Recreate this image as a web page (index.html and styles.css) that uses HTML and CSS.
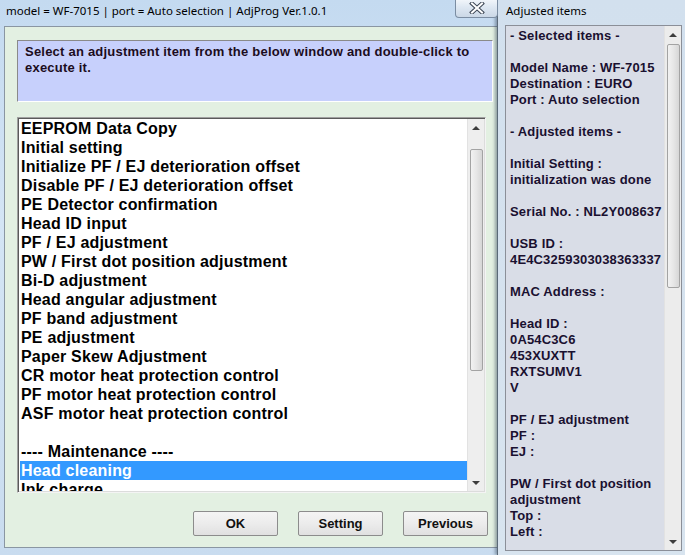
FILE: index.html
```html
<!DOCTYPE html>
<html lang="en">
<head>
<meta charset="UTF-8">
<title>AdjProg</title>
<link rel="stylesheet" href="styles.css">
</head>
<body>

<div class="desk">
  <div class="win main">
    <div class="titlebar">
      <span class="title">model = WF-7015 | port = Auto selection | AdjProg Ver.1.0.1</span>
      <button class="close" title="Close">
        <svg width="16" height="12" viewBox="0 0 16 12">
          <path d="M3 1.5 L13 10.5 M13 1.5 L3 10.5" stroke="#3c4654" stroke-width="4" stroke-linecap="square"/>
          <path d="M3 1.5 L13 10.5 M13 1.5 L3 10.5" stroke="#ffffff" stroke-width="2" stroke-linecap="square"/>
        </svg>
      </button>
    </div>
    <div class="client">
      <div class="hint">Select an adjustment item from the below window and double-click to execute it.</div>
      <div class="listbox">
        <ul class="items">
          <li>EEPROM Data Copy</li>
          <li>Initial setting</li>
          <li>Initialize PF / EJ deterioration offset</li>
          <li>Disable PF / EJ deterioration offset</li>
          <li>PE Detector confirmation</li>
          <li>Head ID input</li>
          <li>PF / EJ adjustment</li>
          <li>PW / First dot position adjustment</li>
          <li>Bi-D adjustment</li>
          <li>Head angular adjustment</li>
          <li>PF band adjustment</li>
          <li>PE adjustment</li>
          <li>Paper Skew Adjustment</li>
          <li>CR motor heat protection control</li>
          <li>PF motor heat protection control</li>
          <li>ASF motor heat protection control</li>
          <li>&nbsp;</li>
          <li>---- Maintenance ----</li>
          <li class="selected">Head cleaning</li>
          <li>Ink charge</li>
        </ul>
        <div class="vscroll list-scroll">
          <span class="arrow up"></span>
          <span class="thumb"></span>
          <span class="arrow down"></span>
        </div>
      </div>
      <div class="buttons">
        <button class="btn">OK</button>
        <button class="btn">Setting</button>
        <button class="btn">Previous</button>
      </div>
    </div>
  </div>

  <div class="win side">
    <div class="titlebar">
      <span class="title">Adjusted items</span>
    </div>
    <div class="panel">
      <div class="log">
        <div>- Selected items -</div>
        <div>&nbsp;</div>
        <div>Model Name : WF-7015</div>
        <div>Destination : EURO</div>
        <div>Port : Auto selection</div>
        <div>&nbsp;</div>
        <div>- Adjusted items -</div>
        <div>&nbsp;</div>
        <div>Initial Setting :</div>
        <div>initialization was done</div>
        <div>&nbsp;</div>
        <div>Serial No. : NL2Y008637</div>
        <div>&nbsp;</div>
        <div>USB ID :</div>
        <div>4E4C3259303038363337</div>
        <div>&nbsp;</div>
        <div>MAC Address :</div>
        <div>&nbsp;</div>
        <div>Head ID :</div>
        <div>0A54C3C6</div>
        <div>453XUXTT</div>
        <div>RXTSUMV1</div>
        <div>V</div>
        <div>&nbsp;</div>
        <div>PF / EJ adjustment</div>
        <div>PF :</div>
        <div>EJ :</div>
        <div>&nbsp;</div>
        <div>PW / First dot position</div>
        <div>adjustment</div>
        <div>Top :</div>
        <div>Left :</div>
      </div>
      <div class="vscroll log-scroll">
        <span class="arrow up"></span>
        <span class="thumb"></span>
        <span class="arrow down"></span>
      </div>
    </div>
  </div>
</div>

</body>
</html>
```

FILE: styles.css
```css
html, body { margin: 0; padding: 0; }
body { width: 685px; height: 555px; overflow: hidden; background: #cfe0f0; font-family: "Liberation Sans", Arial, sans-serif; }

.desk { display: flex; height: 555px; }

/* window frames */
.win { display: flex; flex-direction: column; box-sizing: border-box; }
.main { width: 500px; flex: none; background: linear-gradient(180deg, #c4daf0 0%, #d4e5f5 40%, #c9dcef 100%); }
.side { width: 188px; flex: none; margin-left: -3px; background: linear-gradient(180deg, #d2e0ee 0%, #d8e4ef 100%); border-left: 1px solid #5b6a78; box-shadow: -2px 0 3px rgba(40, 60, 80, 0.45); padding-left: 7px; }

.titlebar { height: 26px; flex: none; display: flex; align-items: flex-start; position: relative; }
.title { font-family: "Noto Sans", "Open Sans", sans-serif; font-size: 11.5px; color: #000; padding-top: 3px; white-space: nowrap; }
.main .title { margin-left: 6px; }
.side .title { margin-left: 1px; }

.close { position: absolute; top: -1px; right: 2px; width: 43px; height: 19px; padding: 0; border: 1px solid #7b8da2; border-top: none; border-radius: 0 0 4px 4px; background: linear-gradient(180deg, #f3f7fb 0%, #dce6f1 50%, #cbd8e6 100%); display: flex; align-items: center; justify-content: center; }

/* main client area */
.client { margin-left: 4px; height: 522px; box-sizing: border-box; border: 1px solid #8a96a2; border-right: none; background: #e3f0e2; padding: 13px 0 0 12px; display: flex; flex-direction: column; }

.hint { width: 476px; height: 62px; box-sizing: border-box; background: #c7d0fc; border: 1px solid; border-color: #8a8a8a #ffffff #ffffff #8a8a8a; padding: 3px 7px 0; font-size: 13px; font-weight: bold; color: #1c0c20; line-height: 16px; letter-spacing: 0.22px; }

.listbox { margin-top: 15px; width: 469px; height: 376px; box-sizing: border-box; background: #fff; border: 1px solid; border-color: #a0a0a0 #f4f4f4 #f4f4f4 #a0a0a0; box-shadow: inset 1px 1px 0 #5a5a5a, inset -1px -1px 0 #dcdcdc; padding: 1px 1px 1px 2px; display: flex; overflow: hidden; }
.items { list-style: none; margin: 0; padding: 0; flex: 1; overflow: hidden; }
.items li { height: 19px; line-height: 19px; font-size: 16px; font-weight: bold; color: #000; padding-left: 1px; white-space: nowrap; letter-spacing: 0.2px; }
.items li.selected { background: #3399ff; color: #fff; }

/* scrollbars */
.vscroll { width: 16px; flex: none; background: #eeeeee; border-left: 1px solid #e2e2e2; display: flex; flex-direction: column; align-items: center; }
.vscroll .arrow { width: 0; height: 0; border-left: 4px solid transparent; border-right: 4px solid transparent; flex: none; }
.vscroll .arrow.up { border-bottom: 4px solid #3c3c3c; margin-top: 7px; }
.vscroll .arrow.down { border-top: 4px solid #3c3c3c; margin-top: auto; margin-bottom: 6px; }
.vscroll .thumb { width: 13px; box-sizing: border-box; border: 1px solid #a3a3a3; border-radius: 2px; background: linear-gradient(90deg, #f2f2f2 0%, #e6e6e6 50%, #d6d6d6 100%); }
.list-scroll .thumb { margin-top: 19px; height: 222px; }
.log-scroll .thumb { margin-top: 7px; height: 244px; }

/* buttons */
.buttons { margin-top: 18px; width: 471px; display: flex; justify-content: flex-end; gap: 20px; }
.btn { width: 85px; height: 25px; padding: 0; font-family: "Liberation Sans", Arial, sans-serif; font-size: 13px; font-weight: bold; color: #111; background: linear-gradient(180deg, #f4f4f4 0%, #ececec 50%, #e0e0e0 100%); border: 1px solid #8c8c8c; border-radius: 2px; }

/* adjusted items panel */
.panel { margin-top: -1px; width: 177px; height: 526px; box-sizing: border-box; background: #d9dde7; border: 1px solid #8b8f98; display: flex; }
.log { flex: 1; padding: 2px 0 0 4px; font-size: 13px; font-weight: bold; color: #1a1030; line-height: 16px; letter-spacing: 0.15px; overflow: hidden; white-space: nowrap; }
.log-scroll { background: #ececec; }
```
